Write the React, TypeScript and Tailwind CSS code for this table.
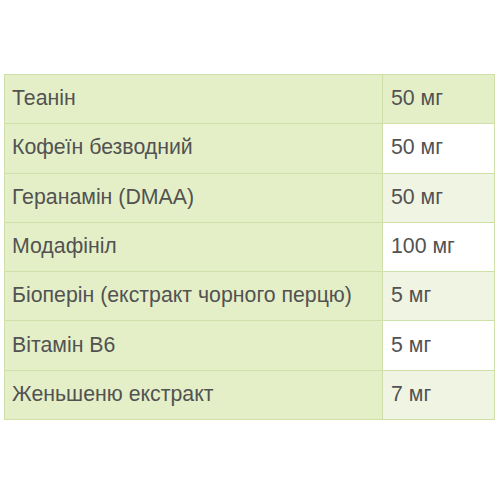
const rows: [string, string][] = [
  ["Теанін", "50 мг"],
  ["Кофеїн безводний", "50 мг"],
  ["Геранамін (DMAA)", "50 мг"],
  ["Модафініл", "100 мг"],
  ["Біоперін (екстракт чорного перцю)", "5 мг"],
  ["Вітамін В6", "5 мг"],
  ["Женьшеню екстракт", "7 мг"],
];

export default function App() {
  return (
    <div className="w-[500px] h-[500px] bg-white pt-[74px] pl-[4px] font-['Liberation_Sans',Arial,sans-serif]">
      <table className="w-[491px] border-collapse text-[21.3px] text-[#525252]">
        <tbody>
          {rows.map(([name, dose], i) => (
            <tr key={name} className="h-[49.3px]">
              <td className="w-[378px] border border-[#cfdfa8] bg-[#e4efc7] pl-[7px] align-middle">
                {name}
              </td>
              <td
                className={`border border-[#cfdfa8] pl-[8px] align-middle ${
                  i === 0
                    ? "bg-[#e4efc7]"
                    : i % 2 === 0
                      ? "bg-[#eff5e2]"
                      : "bg-white"
                }`}
              >
                {dose}
              </td>
            </tr>
          ))}
        </tbody>
      </table>
    </div>
  );
}
